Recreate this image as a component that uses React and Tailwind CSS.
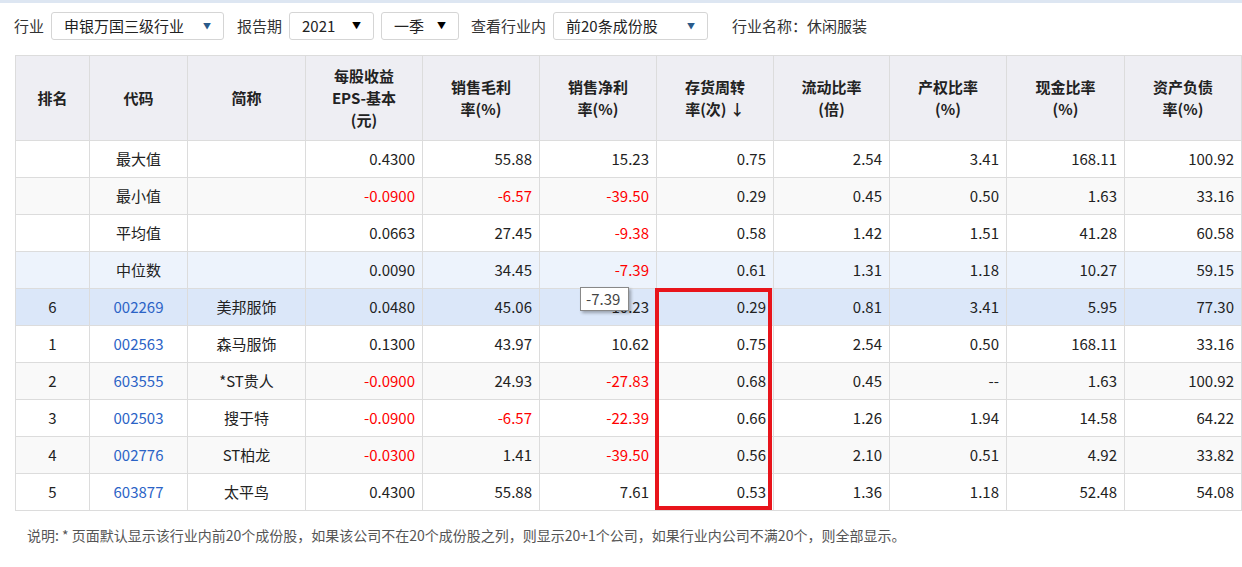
const W=[74,98,118,117,117,117,117,116,117,118,117];
const H=[["排名"],["代码"],["简称"],["每股收益","EPS-基本","(元)"],["销售毛利","率(%)"],["销售净利","率(%)"],["存货周转","率(次) ↓"],["流动比率","(倍)"],["产权比率","(%)"],["现金比率","(%)"],["资产负债","率(%)"]];
const R=[
["","最大值","","0.4300","55.88","15.23","0.75","2.54","3.41","168.11","100.92"],
["","最小值","","-0.0900","-6.57","-39.50","0.29","0.45","0.50","1.63","33.16"],
["","平均值","","0.0663","27.45","-9.38","0.58","1.42","1.51","41.28","60.58"],
["","中位数","","0.0090","34.45","-7.39","0.61","1.31","1.18","10.27","59.15"],
["6","002269","美邦服饰","0.0480","45.06","10.23","0.29","0.81","3.41","5.95","77.30"],
["1","002563","森马服饰","0.1300","43.97","10.62","0.75","2.54","0.50","168.11","33.16"],
["2","603555","*ST贵人","-0.0900","24.93","-27.83","0.68","0.45","--","1.63","100.92"],
["3","002503","搜于特","-0.0900","-6.57","-22.39","0.66","1.26","1.94","14.58","64.22"],
["4","002776","ST柏龙","-0.0300","1.41","-39.50","0.56","2.10","0.51","4.92","33.82"],
["5","603877","太平鸟","0.4300","55.88","7.61","0.53","1.36","1.18","52.48","54.08"]];
const bgs=["bg-white","bg-[#f9f9f9]","bg-white","bg-[#edf3fc]","bg-[#dbe7f9]","bg-white","bg-[#f9f9f9]","bg-white","bg-[#f9f9f9]","bg-white"];
function Sel({w,t,arrow="small"}){return <div style={{width:w}} className="h-[28px] border border-[#d5d5d5] rounded-[3px] bg-white flex items-center justify-between px-3 text-[15px] text-[#222]"><span>{t}</span>{arrow==="small"?<span className="text-[8px] text-[#2a5a8a]">▼</span>:<span className="text-[9px] text-black">▼</span>}</div>}
export default function App(){return <div className="w-[1242px] h-[567px] bg-white relative overflow-hidden text-[#222]" style={{fontFamily:'"Noto Sans CJK SC","Noto Sans",sans-serif'}}>
<div className="h-[3px] bg-[#dde6f2]"/>
<div className="flex items-center h-[46px] pl-[14px] text-[15px] text-[#333] gap-[7px]">
<span>行业</span><Sel w={173} t="申银万国三级行业"/><span className="ml-[6px]">报告期</span><Sel w={85} t="2021" arrow="big"/><Sel w={78} t="一季" arrow="big"/><span className="ml-[5px]">查看行业内</span><Sel w={155} t="前20条成份股"/><span className="ml-[17px]">行业名称：休闲服装</span></div>
<div className="ml-[15px] mt-[6px] relative">
<table className="border-collapse text-[15px]" style={{tableLayout:"fixed"}}>
<thead><tr className="bg-[#eeeef3] h-[85px]">{H.map((h,i)=><th key={i} style={{width:W[i]}} className="border border-[#dcdcdc] font-bold text-[15px] leading-[22px] text-[#222]">{h.map((l,j)=><div key={j}>{l}</div>)}</th>)}</tr></thead>
<tbody>{R.map((r,ri)=><tr key={ri} className={`h-[37px] ${bgs[ri]}`}>{r.map((c,ci)=><td key={ci} className={`border border-[#dcdcdc] px-[7px] ${ci<3?"text-center":"text-right"} ${ci===1&&ri>3?"text-[#2b63c6]":""} ${ci>2&&c.startsWith("-")&&c!=="--"&&ci<6?"text-[#f00]":""}`}>{c}</td>)}</tr>)}</tbody></table>
<div className="absolute left-[640px] top-[233px] w-[117px] h-[222px] border-[4px] border-[#e8141b] pointer-events-none"/>
<div className="absolute z-10 left-[565px] top-[232px] w-[49px] bg-white border border-[#888] px-[5px] text-[15px] text-[#444] shadow-[2px_2px_3px_rgba(0,0,0,0.3)] leading-[22px]">-7.39</div>
</div>
<div className="ml-[27px] mt-[14px] text-[14px] text-[#555]">说明: * 页面默认显示该行业内前20个成份股，如果该公司不在20个成份股之列，则显示20+1个公司，如果行业内公司不满20个，则全部显示。</div>
</div>}
